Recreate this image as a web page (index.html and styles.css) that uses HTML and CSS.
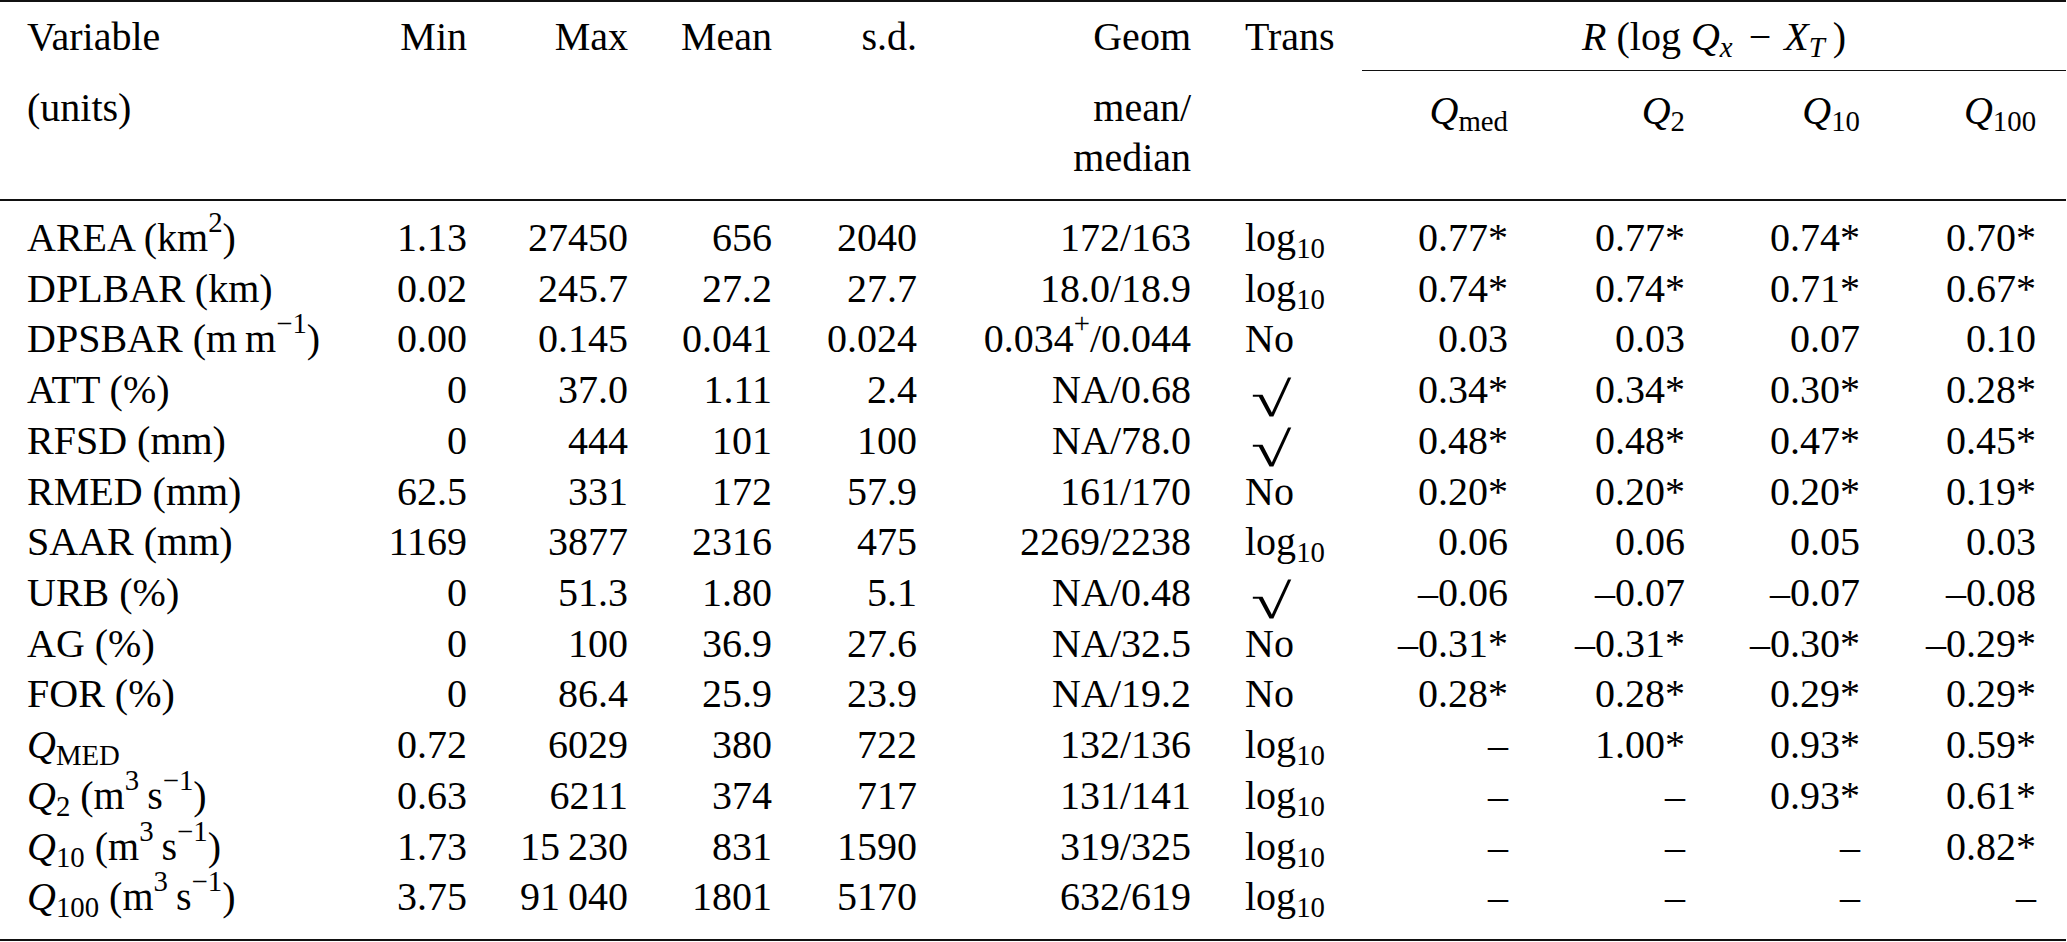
FILE: index.html
```html
<!DOCTYPE html>
<html lang="en">
<head>
<meta charset="utf-8">
<title>Catchment descriptor statistics</title>
<link rel="stylesheet" href="styles.css">
</head>
<body>
<table class="stats">
  <colgroup>
    <col class="c-var"><col class="c-min"><col class="c-max"><col class="c-mean"><col class="c-sd">
    <col class="c-geom"><col class="c-trans"><col class="c-qmed"><col class="c-q2"><col class="c-q10"><col class="c-q100">
  </colgroup>
  <thead>
    <tr class="h1">
      <th class="var">Variable</th>
      <th>Min</th>
      <th>Max</th>
      <th>Mean</th>
      <th>s.d.</th>
      <th>Geom</th>
      <th class="tr">Trans</th>
      <th class="rhead" colspan="4"><i>R</i> (log <i>Q</i><span class="lo"><i>x</i></span><span class="op">−</span><i>X</i><span class="lo"><i>T</i></span>&thinsp;)</th>
    </tr>
    <tr class="h2">
      <th class="var">(units)</th>
      <th></th>
      <th></th>
      <th></th>
      <th></th>
      <th>mean/<br>median</th>
      <th class="tr"></th>
      <th class="qh"><i>Q</i><span class="lo">med</span></th>
      <th class="qh"><i>Q</i><span class="lo">2</span></th>
      <th class="qh"><i>Q</i><span class="lo">10</span></th>
      <th class="qh last"><i>Q</i><span class="lo">100</span></th>
    </tr>
  </thead>
  <tbody>
    <tr><td class="var">AREA (km<span class="hi">2</span>)</td><td>1.13</td><td>27450</td><td>656</td><td>2040</td><td>172/163</td><td class="tr">log<span class="lo">10</span></td><td>0.77*</td><td>0.77*</td><td>0.74*</td><td class="last">0.70*</td></tr>
    <tr><td class="var">DPLBAR (km)</td><td>0.02</td><td>245.7</td><td>27.2</td><td>27.7</td><td>18.0/18.9</td><td class="tr">log<span class="lo">10</span></td><td>0.74*</td><td>0.74*</td><td>0.71*</td><td class="last">0.67*</td></tr>
    <tr><td class="var">DPSBAR (m&thinsp;m<span class="hi">−1</span>)</td><td>0.00</td><td>0.145</td><td>0.041</td><td>0.024</td><td>0.034<span class="hi">+</span>/0.044</td><td class="tr">No</td><td>0.03</td><td>0.03</td><td>0.07</td><td class="last">0.10</td></tr>
    <tr><td class="var">ATT (%)</td><td>0</td><td>37.0</td><td>1.11</td><td>2.4</td><td>NA/0.68</td><td class="tr"><span class="surd">√</span></td><td>0.34*</td><td>0.34*</td><td>0.30*</td><td class="last">0.28*</td></tr>
    <tr><td class="var">RFSD (mm)</td><td>0</td><td>444</td><td>101</td><td>100</td><td>NA/78.0</td><td class="tr"><span class="surd">√</span></td><td>0.48*</td><td>0.48*</td><td>0.47*</td><td class="last">0.45*</td></tr>
    <tr><td class="var">RMED (mm)</td><td>62.5</td><td>331</td><td>172</td><td>57.9</td><td>161/170</td><td class="tr">No</td><td>0.20*</td><td>0.20*</td><td>0.20*</td><td class="last">0.19*</td></tr>
    <tr><td class="var">SAAR (mm)</td><td>1169</td><td>3877</td><td>2316</td><td>475</td><td>2269/2238</td><td class="tr">log<span class="lo">10</span></td><td>0.06</td><td>0.06</td><td>0.05</td><td class="last">0.03</td></tr>
    <tr><td class="var">URB (%)</td><td>0</td><td>51.3</td><td>1.80</td><td>5.1</td><td>NA/0.48</td><td class="tr"><span class="surd">√</span></td><td>–0.06</td><td>–0.07</td><td>–0.07</td><td class="last">–0.08</td></tr>
    <tr><td class="var">AG (%)</td><td>0</td><td>100</td><td>36.9</td><td>27.6</td><td>NA/32.5</td><td class="tr">No</td><td>–0.31*</td><td>–0.31*</td><td>–0.30*</td><td class="last">–0.29*</td></tr>
    <tr><td class="var">FOR (%)</td><td>0</td><td>86.4</td><td>25.9</td><td>23.9</td><td>NA/19.2</td><td class="tr">No</td><td>0.28*</td><td>0.28*</td><td>0.29*</td><td class="last">0.29*</td></tr>
    <tr><td class="var"><i>Q</i><span class="lo">MED</span></td><td>0.72</td><td>6029</td><td>380</td><td>722</td><td>132/136</td><td class="tr">log<span class="lo">10</span></td><td>–</td><td>1.00*</td><td>0.93*</td><td class="last">0.59*</td></tr>
    <tr><td class="var"><i>Q</i><span class="lo">2</span> (m<span class="hi">3</span>&thinsp;s<span class="hi">−1</span>)</td><td>0.63</td><td>6211</td><td>374</td><td>717</td><td>131/141</td><td class="tr">log<span class="lo">10</span></td><td>–</td><td>–</td><td>0.93*</td><td class="last">0.61*</td></tr>
    <tr><td class="var"><i>Q</i><span class="lo">10</span> (m<span class="hi">3</span>&thinsp;s<span class="hi">−1</span>)</td><td>1.73</td><td>15&thinsp;230</td><td>831</td><td>1590</td><td>319/325</td><td class="tr">log<span class="lo">10</span></td><td>–</td><td>–</td><td>–</td><td class="last">0.82*</td></tr>
    <tr><td class="var"><i>Q</i><span class="lo">100</span> (m<span class="hi">3</span>&thinsp;s<span class="hi">−1</span>)</td><td>3.75</td><td>91&thinsp;040</td><td>1801</td><td>5170</td><td>632/619</td><td class="tr">log<span class="lo">10</span></td><td>–</td><td>–</td><td>–</td><td class="last">–</td></tr>
  </tbody>
</table>
</body>
</html>
```

FILE: styles.css
```css
* { box-sizing: border-box; }

html, body {
  margin: 0;
  padding: 0;
  background: #ffffff;
}

body {
  font-family: "Liberation Serif", "Times New Roman", serif;
  color: #000;
  overflow: hidden;
}

.stats {
  width: 2066px;
  table-layout: fixed;
  border-collapse: separate;
  border-spacing: 0;
  font-size: 40px;
  border-top: 2px solid #111;
  border-bottom: 2px solid #111;
}

.c-var { width: 340px; }
.c-min { width: 142px; }
.c-max { width: 161px; }
.c-mean { width: 144px; }
.c-sd { width: 145px; }
.c-geom { width: 274px; }
.c-trans { width: 156px; }
.c-qmed { width: 161px; }
.c-q2 { width: 177px; }
.c-q10 { width: 175px; }
.c-q100 { width: 191px; }

.stats th,
.stats td {
  padding: 0 15px 0 0;
  text-align: right;
  font-weight: normal;
  white-space: nowrap;
  vertical-align: top;
}

.stats .var {
  text-align: left;
  padding-left: 27px;
  padding-right: 0;
}

.stats .tr {
  text-align: left;
  padding-left: 39px;
  padding-right: 0;
}

.stats .last { padding-right: 30px; }

.h1 th {
  line-height: 50px;
  padding-top: 9.5px;
  padding-bottom: 8.5px;
}

.h1 .rhead {
  text-align: center;
  padding-right: 0;
  border-bottom: 1.5px solid #111;
}

.op { padding: 0 13px 0 16px; }

.h2 th {
  line-height: 50px;
  padding-top: 12px;
  padding-bottom: 15.5px;
  border-bottom: 2px solid #111;
}

.h2 .qh { padding-top: 15px; }

.stats tbody td { line-height: 50.72px; }
.stats tbody tr:first-child td { padding-top: 12.45px; }
.stats tbody tr:last-child td { padding-bottom: 15.5px; }

.hi,
.lo {
  font-size: 0.72em;
  line-height: 0;
  font-variant-position: normal;
}

.hi { vertical-align: 0.65em; }
.lo { vertical-align: -0.25em; }

i { font-style: italic; }

.surd {
  display: inline-block;
  font-size: 49px;
  line-height: 0;
  vertical-align: -0.255em;
  margin-left: 6px;
  transform: scaleX(1.5);
  transform-origin: left center;
}
```
